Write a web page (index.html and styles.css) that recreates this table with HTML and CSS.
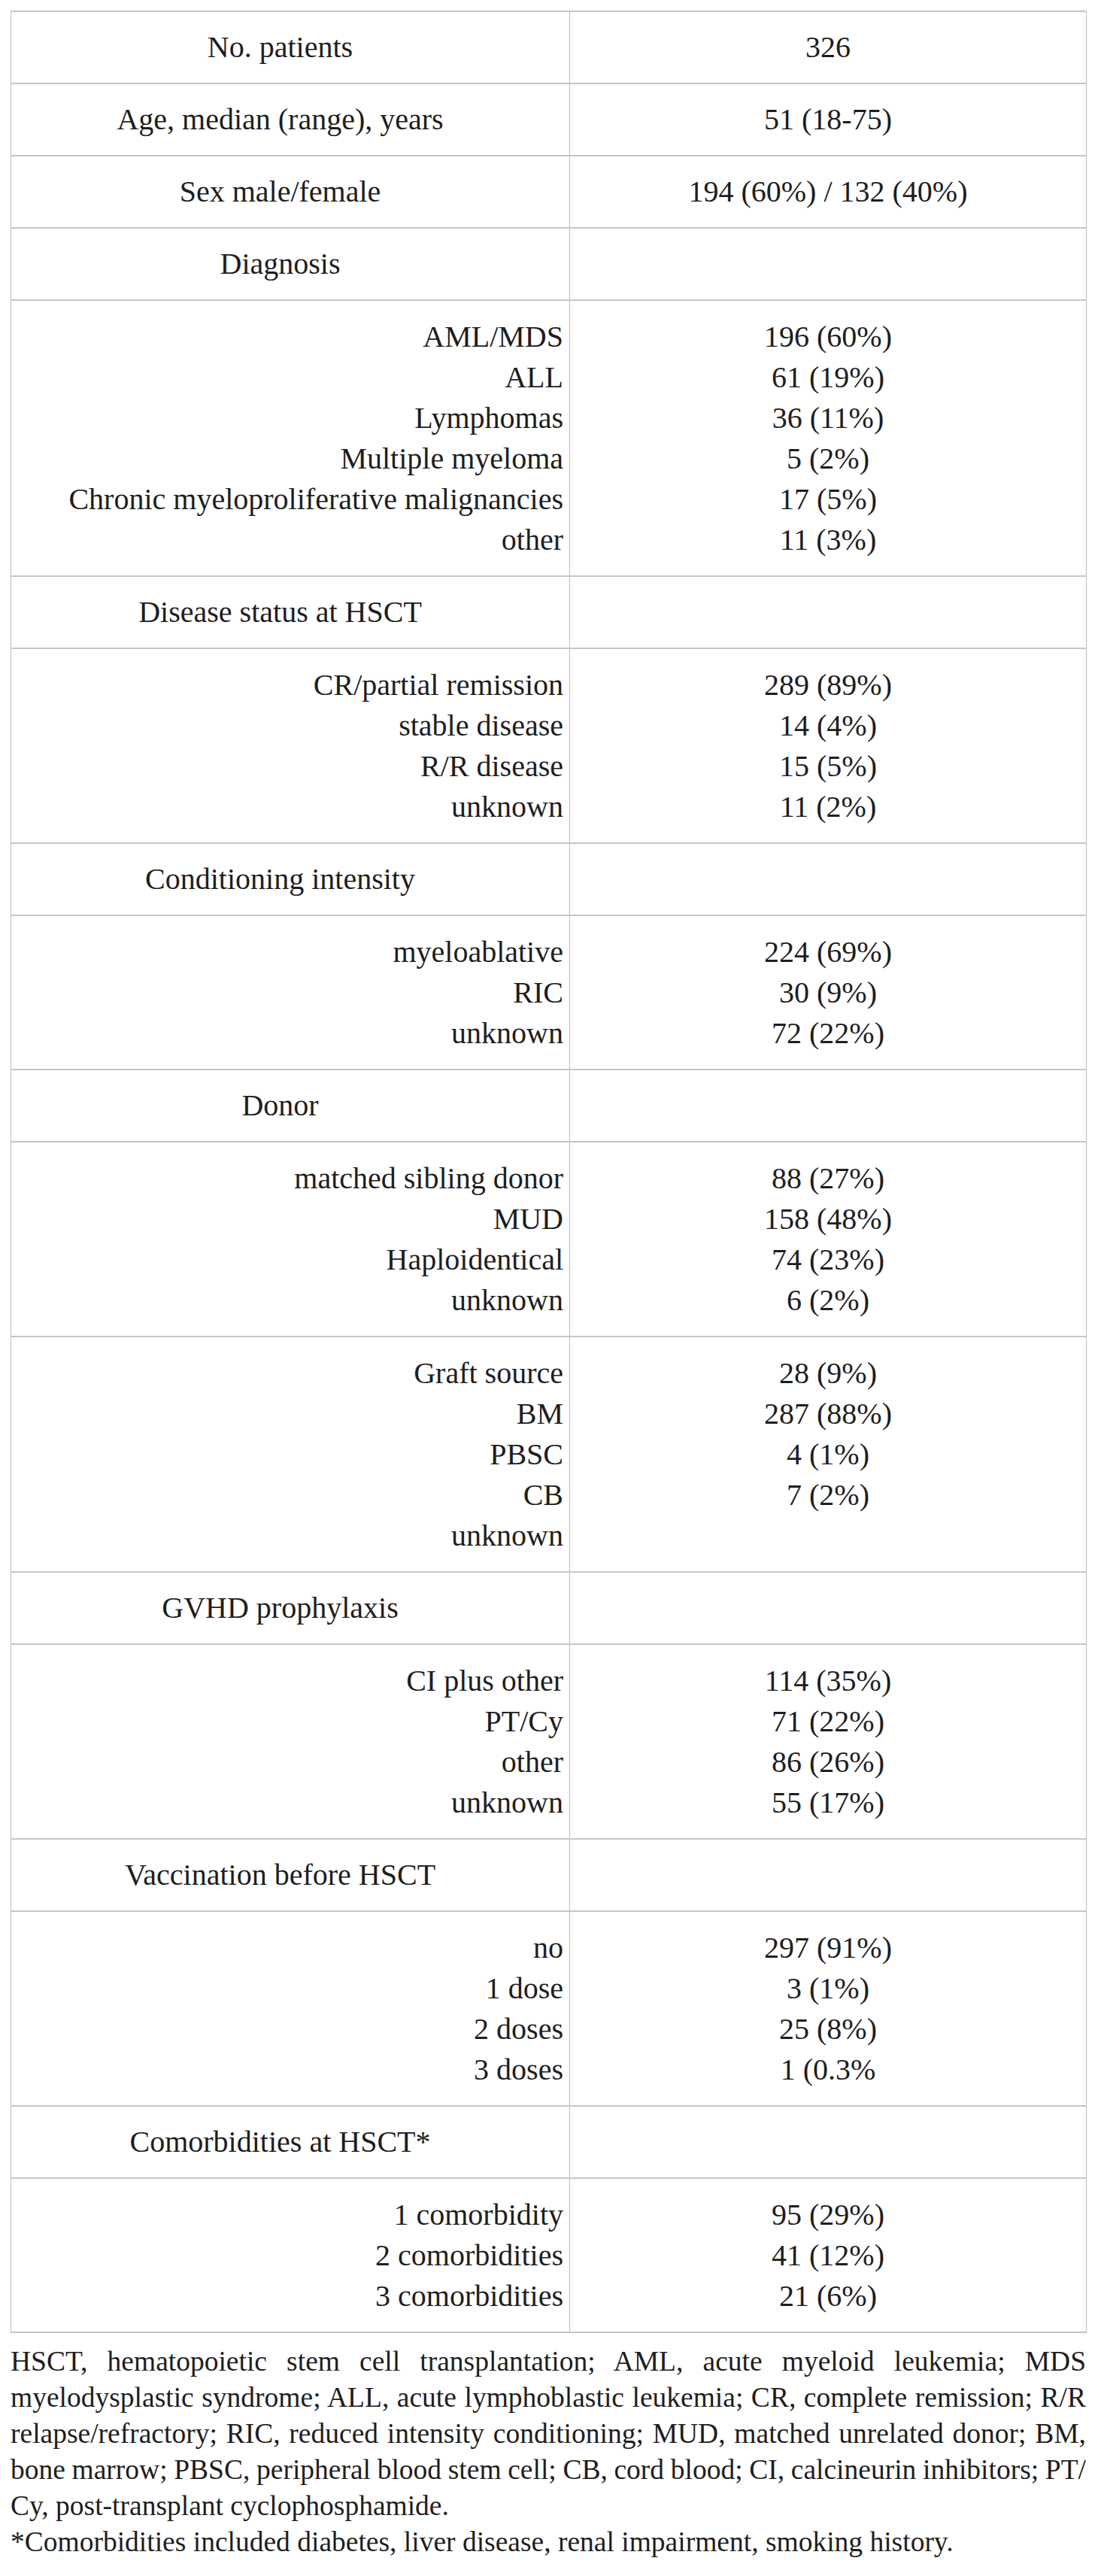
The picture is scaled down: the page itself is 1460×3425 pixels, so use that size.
FILE: index.html
```html
<!DOCTYPE html>
<html lang="en">
<head>
<meta charset="utf-8">
<title>Patient characteristics</title>
<link rel="stylesheet" href="styles.css">
</head>
<body>
<div class="page">
  <table class="chars">
    <colgroup><col class="c1"><col class="c2"></colgroup>
    <tbody>
      <tr class="single"><td class="lbl head">No. patients</td><td class="val">326</td></tr>
      <tr class="single"><td class="lbl head">Age, median (range), years</td><td class="val">51 (18-75)</td></tr>
      <tr class="single"><td class="lbl head">Sex male/female</td><td class="val">194 (60%) / 132 (40%)</td></tr>
      <tr class="single"><td class="lbl head">Diagnosis</td><td class="val"></td></tr>
      <tr class="multi">
        <td class="lbl items">AML/MDS<br>ALL<br>Lymphomas<br>Multiple myeloma<br>Chronic myeloproliferative malignancies<br>other</td>
        <td class="val">196 (60%)<br>61 (19%)<br>36 (11%)<br>5 (2%)<br>17 (5%)<br>11 (3%)</td>
      </tr>
      <tr class="single"><td class="lbl head">Disease status at HSCT</td><td class="val"></td></tr>
      <tr class="multi">
        <td class="lbl items">CR/partial remission<br>stable disease<br>R/R disease<br>unknown</td>
        <td class="val">289 (89%)<br>14 (4%)<br>15 (5%)<br>11 (2%)</td>
      </tr>
      <tr class="single"><td class="lbl head">Conditioning intensity</td><td class="val"></td></tr>
      <tr class="multi">
        <td class="lbl items">myeloablative<br>RIC<br>unknown</td>
        <td class="val">224 (69%)<br>30 (9%)<br>72 (22%)</td>
      </tr>
      <tr class="single"><td class="lbl head">Donor</td><td class="val"></td></tr>
      <tr class="multi">
        <td class="lbl items">matched sibling donor<br>MUD<br>Haploidentical<br>unknown</td>
        <td class="val">88 (27%)<br>158 (48%)<br>74 (23%)<br>6 (2%)</td>
      </tr>
      <tr class="multi">
        <td class="lbl items">Graft source<br>BM<br>PBSC<br>CB<br>unknown</td>
        <td class="val">28 (9%)<br>287 (88%)<br>4 (1%)<br>7 (2%)<br>&nbsp;</td>
      </tr>
      <tr class="single"><td class="lbl head">GVHD prophylaxis</td><td class="val"></td></tr>
      <tr class="multi">
        <td class="lbl items">CI plus other<br>PT/Cy<br>other<br>unknown</td>
        <td class="val">114 (35%)<br>71 (22%)<br>86 (26%)<br>55 (17%)</td>
      </tr>
      <tr class="single"><td class="lbl head">Vaccination before HSCT</td><td class="val"></td></tr>
      <tr class="multi">
        <td class="lbl items">no<br>1 dose<br>2 doses<br>3 doses</td>
        <td class="val">297 (91%)<br>3 (1%)<br>25 (8%)<br>1 (0.3%</td>
      </tr>
      <tr class="single"><td class="lbl head">Comorbidities at HSCT*</td><td class="val"></td></tr>
      <tr class="multi">
        <td class="lbl items">1 comorbidity<br>2 comorbidities<br>3 comorbidities</td>
        <td class="val">95 (29%)<br>41 (12%)<br>21 (6%)</td>
      </tr>
    </tbody>
  </table>
  <div class="notes">
    <p class="abbr">
      <span class="ln">HSCT, hematopoietic stem cell transplantation; AML, acute myeloid leukemia; MDS</span>
      <span class="ln">myelodysplastic syndrome; ALL, acute lymphoblastic leukemia; CR, complete remission; R/R</span>
      <span class="ln">relapse/refractory; RIC, reduced intensity conditioning; MUD, matched unrelated donor; BM,</span>
      <span class="ln">bone marrow; PBSC, peripheral blood stem cell; CB, cord blood; CI, calcineurin inhibitors; PT/</span>
      <span class="ln last">Cy, post-transplant cyclophosphamide.</span>
    </p>
    <p class="foot">*Comorbidities included diabetes, liver disease, renal impairment, smoking history.</p>
  </div>
</div>
</body>
</html>
```

FILE: styles.css
```css
html, body {
  margin: 0;
  padding: 0;
  background: #ffffff;
}

.page {
  padding: 14px 16px 0 14px;
  font-family: "Liberation Serif", "Times New Roman", serif;
  color: #1e1e1e;
}

.chars {
  width: 1430px;
  border-collapse: collapse;
  table-layout: fixed;
  font-size: 40px;
  line-height: 54px;
}

.c1 {
  width: 743px;
}

.c2 {
  width: 687px;
}

.chars td {
  border-left: 1px solid #bcbcbc;
  border-right: 1px solid #bcbcbc;
  border-top: 2px solid #c6c6c6;
  border-bottom: 2px solid #c6c6c6;
  vertical-align: middle;
}

.single td {
  padding: 20px 8px 20px 8px;
}

.multi td {
  padding: 20.5px 8px 20.5px 8px;
}

.chars .head {
  text-align: center;
  padding-right: 35px;
}

.chars .items {
  text-align: right;
}

.chars .val {
  text-align: center;
}

.notes {
  width: 1430px;
  font-size: 37.5px;
  line-height: 48px;
}

.notes p {
  margin: 0;
}

.abbr {
  padding-top: 14px;
}

.ln {
  display: block;
  white-space: nowrap;
  word-spacing: -3px;
  text-align: justify;
  text-align-last: justify;
}

.ln.last {
  word-spacing: 0;
  text-align-last: left;
}
```
